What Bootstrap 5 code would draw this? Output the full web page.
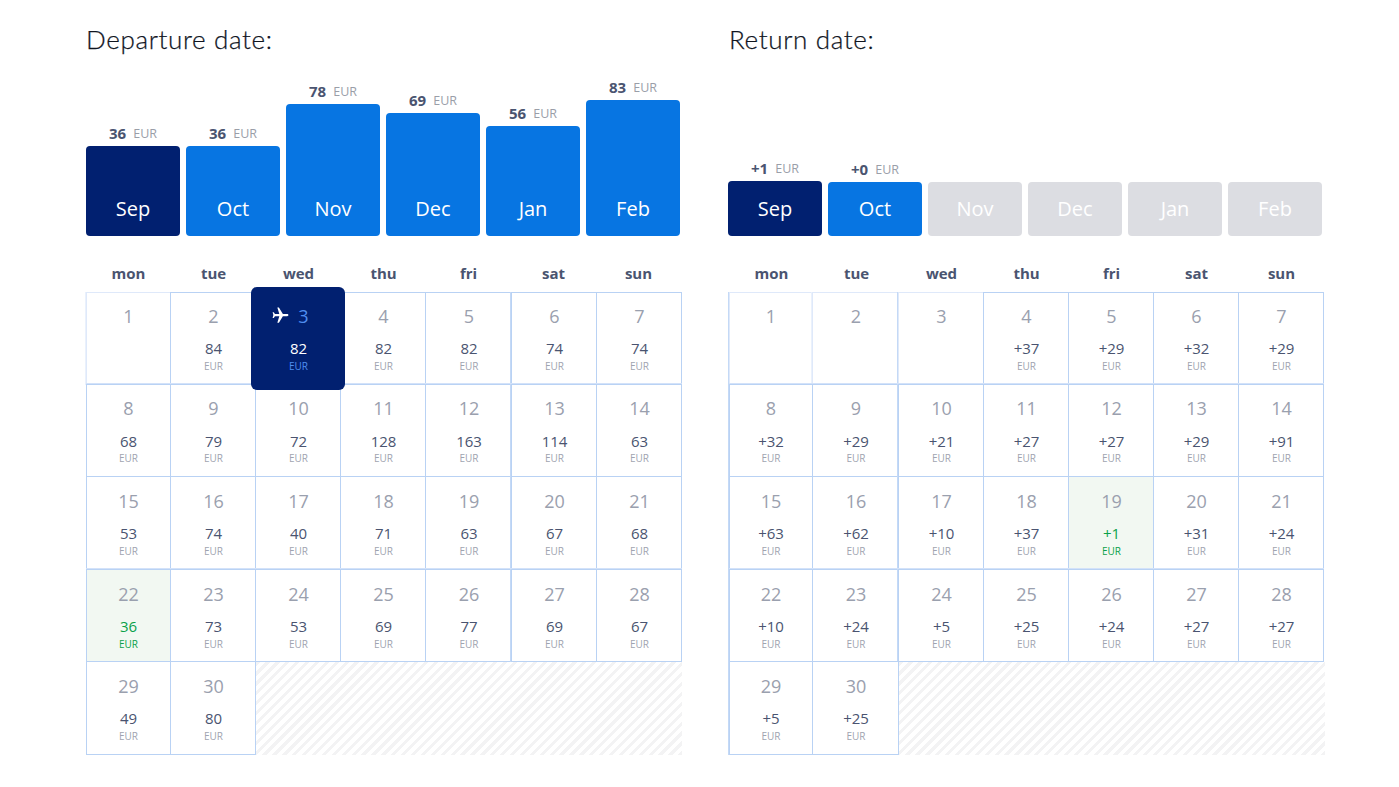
<!DOCTYPE html>
<html lang="en">
<head>
    <meta charset="UTF-8">
    <meta name="viewport" content="width=device-width, initial-scale=1.0">
    <title>Flight dates</title>
    <link href="https://cdn.jsdelivr.net/npm/bootstrap@5.3.0/dist/css/bootstrap.min.css" rel="stylesheet">
    <style>
        body {
            background-color: #fff;
            font-family: 'Open Sans', 'Liberation Sans', sans-serif;
        }
        .dates-wrap {
            padding-left: 86px;
            padding-bottom: 32px;
            gap: 47px;
        }
        .dates-panel {
            width: 596px;
        }
        .dates-title {
            font-family: Lato, 'Open Sans', sans-serif;
            font-weight: 300;
            font-size: 26px;
            line-height: 32px;
            letter-spacing: .65px;
            -webkit-text-stroke: .25px #10151f;
            color: #10151f;
            margin: 23px 0 0;
        }
        .month-row {
            height: 181px;
            gap: 6px;
        }
        .month-row.shift {
            margin-left: -1px;
        }
        .month-col {
            width: 94px;
        }
        .month-price {
            font-size: 12.5px;
            line-height: 20px;
            color: #9a9ea8;
            gap: 7px;
            margin-bottom: 1px;
        }
        .month-price b {
            font-size: 15px;
            color: #4a5470;
            margin-bottom: 2px;
        }
        .month-bar {
            font-size: 20px;
            color: #fff;
            padding-bottom: 12px;
            border-radius: 4px;
            background-color: #0775e2;
        }
        .month-bar.on {
            background-color: #012070;
        }
        .month-bar.off {
            background-color: #dcdde2;
        }
        .week-head {
            display: grid;
            grid-template-columns: repeat(7, 85px);
            margin-top: 27px;
            height: 29px;
            font-size: 15px;
            line-height: 20px;
            font-weight: 700;
            color: #4a5470;
        }
        .cal-grid {
            display: grid;
            grid-template-rows: 92px 92px 93px 92px 93px;
        }
        .cal-a {
            grid-template-columns: 84px 85px 85px 85px 86px 85px 85px;
        }
        .cal-b {
            grid-template-columns: 83px 86px 85px 85px 85px 85px 85px;
        }
        .cal-day {
            border: 1px solid #b9d2f4;
            margin: 0 -1px -1px 0;
            padding: 11px 0 0 1px;
            box-shadow: var(--edge-top, 0 0 transparent), var(--edge-left, 0 0 transparent);
        }
        .cal-day:nth-child(7n+1) {
            padding-left: 0;
        }
        .cal-day:nth-child(n+15) {
            padding-top: 12px;
        }
        /* the doubled grid lines */
        .cal-day:nth-child(n+8):nth-child(-n+14),
        .cal-day:nth-child(n+22):nth-child(-n+28) {
            --edge-top: 0 -1px 0 #d3e2f9;
        }
        .cal-a .cal-day:nth-child(7n+6),
        .cal-b .cal-day:nth-child(7n+1),
        .cal-b .cal-day:nth-child(7n+3) {
            --edge-left: -1px 0 0 #c4d9f6;
        }
        .cal-day.empty {
            border-color: #dfe9fa;
            --edge-left: -1px 0 0 #eaf1fc;
        }
        .cal-num {
            font-size: 18px;
            line-height: 24px;
            color: #9aa0ae;
        }
        .cal-price {
            font-size: 15px;
            line-height: 20px;
            margin: 11px 0 1px;
            color: #4a5470;
        }
        .cal-day:nth-child(-n+7) .cal-price,
        .cal-day:nth-child(n+15) .cal-price {
            margin-top: 10px;
        }
        .cal-day:nth-child(n+8):nth-child(-n+14) .cal-price {
            margin-bottom: 0;
        }
        .cal-cur {
            font-size: 10px;
            line-height: 14px;
            color: #a0a4b0;
        }
        .cal-day.best {
            background-color: #f2f8f2;
        }
        .cal-day.best .cal-price,
        .cal-day.best .cal-cur {
            color: #0ba14a;
        }
        .cal-day.pick {
            position: relative;
            z-index: 2;
            margin: -5px -5px -6px -4px;
            padding-top: 17px;
            border: 0;
            border-radius: 6px;
            background-color: #012070;
        }
        .pick .cal-num {
            color: #4f8ef0;
            padding-left: 10px;
        }
        .pick .cal-price {
            color: #fff;
        }
        .pick .cal-cur {
            color: #4f8ef0;
        }
        .pick svg {
            position: absolute;
            left: 20px;
            top: 19px;
            width: 19px;
            height: 19px;
            fill: #fff;
        }
        .cal-none {
            margin: 1px -1px -1px 1px;
            background: repeating-linear-gradient(135deg, #f3f3f4 0, #f3f3f4 3px, #fff 3px, #fff 7px);
        }
        .cal-b .cal-none {
            margin-right: -2px;
        }
    </style>
</head>
<body>
    <div class="dates-wrap d-flex">

        <!-- Departure -->
        <div class="dates-panel">
            <h2 class="dates-title">Departure date:</h2>
            <div class="month-row d-flex align-items-end">
                <div class="month-col"><div class="month-price d-flex justify-content-center align-items-center"><b>36</b><span>EUR</span></div><div class="month-bar on d-flex align-items-end justify-content-center" style="height: 90px">Sep</div></div>
                <div class="month-col"><div class="month-price d-flex justify-content-center align-items-center"><b>36</b><span>EUR</span></div><div class="month-bar d-flex align-items-end justify-content-center" style="height: 90px">Oct</div></div>
                <div class="month-col"><div class="month-price d-flex justify-content-center align-items-center"><b>78</b><span>EUR</span></div><div class="month-bar d-flex align-items-end justify-content-center" style="height: 132px">Nov</div></div>
                <div class="month-col"><div class="month-price d-flex justify-content-center align-items-center"><b>69</b><span>EUR</span></div><div class="month-bar d-flex align-items-end justify-content-center" style="height: 123px">Dec</div></div>
                <div class="month-col"><div class="month-price d-flex justify-content-center align-items-center"><b>56</b><span>EUR</span></div><div class="month-bar d-flex align-items-end justify-content-center" style="height: 110px">Jan</div></div>
                <div class="month-col"><div class="month-price d-flex justify-content-center align-items-center"><b>83</b><span>EUR</span></div><div class="month-bar d-flex align-items-end justify-content-center" style="height: 136px">Feb</div></div>
            </div>
            <div class="week-head text-center"><div>mon</div><div>tue</div><div>wed</div><div>thu</div><div>fri</div><div>sat</div><div>sun</div></div>
            <div class="cal-grid cal-a text-center">
                <div class="cal-day empty"><div class="cal-num">1</div></div>
                <div class="cal-day"><div class="cal-num">2</div><div class="cal-price">84</div><div class="cal-cur">EUR</div></div>
                <div class="cal-day pick"><svg viewBox="0 0 24 24"><path transform="rotate(90 12 12)" d="M21 16v-2l-8-5V3.5c0-.83-.67-1.5-1.5-1.5S10 2.67 10 3.5V9l-8 5v2l8-2.5V19l-2 1.5V22l3.5-1 3.5 1v-1.5L13 19v-5.500l8 2.500z"/></svg><div class="cal-num">3</div><div class="cal-price">82</div><div class="cal-cur">EUR</div></div>
                <div class="cal-day"><div class="cal-num">4</div><div class="cal-price">82</div><div class="cal-cur">EUR</div></div>
                <div class="cal-day"><div class="cal-num">5</div><div class="cal-price">82</div><div class="cal-cur">EUR</div></div>
                <div class="cal-day"><div class="cal-num">6</div><div class="cal-price">74</div><div class="cal-cur">EUR</div></div>
                <div class="cal-day"><div class="cal-num">7</div><div class="cal-price">74</div><div class="cal-cur">EUR</div></div>

                <div class="cal-day"><div class="cal-num">8</div><div class="cal-price">68</div><div class="cal-cur">EUR</div></div>
                <div class="cal-day"><div class="cal-num">9</div><div class="cal-price">79</div><div class="cal-cur">EUR</div></div>
                <div class="cal-day"><div class="cal-num">10</div><div class="cal-price">72</div><div class="cal-cur">EUR</div></div>
                <div class="cal-day"><div class="cal-num">11</div><div class="cal-price">128</div><div class="cal-cur">EUR</div></div>
                <div class="cal-day"><div class="cal-num">12</div><div class="cal-price">163</div><div class="cal-cur">EUR</div></div>
                <div class="cal-day"><div class="cal-num">13</div><div class="cal-price">114</div><div class="cal-cur">EUR</div></div>
                <div class="cal-day"><div class="cal-num">14</div><div class="cal-price">63</div><div class="cal-cur">EUR</div></div>

                <div class="cal-day"><div class="cal-num">15</div><div class="cal-price">53</div><div class="cal-cur">EUR</div></div>
                <div class="cal-day"><div class="cal-num">16</div><div class="cal-price">74</div><div class="cal-cur">EUR</div></div>
                <div class="cal-day"><div class="cal-num">17</div><div class="cal-price">40</div><div class="cal-cur">EUR</div></div>
                <div class="cal-day"><div class="cal-num">18</div><div class="cal-price">71</div><div class="cal-cur">EUR</div></div>
                <div class="cal-day"><div class="cal-num">19</div><div class="cal-price">63</div><div class="cal-cur">EUR</div></div>
                <div class="cal-day"><div class="cal-num">20</div><div class="cal-price">67</div><div class="cal-cur">EUR</div></div>
                <div class="cal-day"><div class="cal-num">21</div><div class="cal-price">68</div><div class="cal-cur">EUR</div></div>

                <div class="cal-day best"><div class="cal-num">22</div><div class="cal-price">36</div><div class="cal-cur">EUR</div></div>
                <div class="cal-day"><div class="cal-num">23</div><div class="cal-price">73</div><div class="cal-cur">EUR</div></div>
                <div class="cal-day"><div class="cal-num">24</div><div class="cal-price">53</div><div class="cal-cur">EUR</div></div>
                <div class="cal-day"><div class="cal-num">25</div><div class="cal-price">69</div><div class="cal-cur">EUR</div></div>
                <div class="cal-day"><div class="cal-num">26</div><div class="cal-price">77</div><div class="cal-cur">EUR</div></div>
                <div class="cal-day"><div class="cal-num">27</div><div class="cal-price">69</div><div class="cal-cur">EUR</div></div>
                <div class="cal-day"><div class="cal-num">28</div><div class="cal-price">67</div><div class="cal-cur">EUR</div></div>

                <div class="cal-day"><div class="cal-num">29</div><div class="cal-price">49</div><div class="cal-cur">EUR</div></div>
                <div class="cal-day"><div class="cal-num">30</div><div class="cal-price">80</div><div class="cal-cur">EUR</div></div>
                <div class="cal-none" style="grid-column: span 5"></div>
            </div>
        </div>

        <!-- Return -->
        <div class="dates-panel">
            <h2 class="dates-title">Return date:</h2>
            <div class="month-row shift d-flex align-items-end">
                <div class="month-col"><div class="month-price d-flex justify-content-center align-items-center"><b>+1</b><span>EUR</span></div><div class="month-bar on d-flex align-items-end justify-content-center" style="height: 55px">Sep</div></div>
                <div class="month-col"><div class="month-price d-flex justify-content-center align-items-center"><b>+0</b><span>EUR</span></div><div class="month-bar d-flex align-items-end justify-content-center" style="height: 54px">Oct</div></div>
                <div class="month-col"><div class="month-bar off d-flex align-items-end justify-content-center" style="height: 54px">Nov</div></div>
                <div class="month-col"><div class="month-bar off d-flex align-items-end justify-content-center" style="height: 54px">Dec</div></div>
                <div class="month-col"><div class="month-bar off d-flex align-items-end justify-content-center" style="height: 54px">Jan</div></div>
                <div class="month-col"><div class="month-bar off d-flex align-items-end justify-content-center" style="height: 54px">Feb</div></div>
            </div>
            <div class="week-head text-center"><div>mon</div><div>tue</div><div>wed</div><div>thu</div><div>fri</div><div>sat</div><div>sun</div></div>
            <div class="cal-grid cal-b text-center">
                <div class="cal-day empty"><div class="cal-num">1</div></div>
                <div class="cal-day empty"><div class="cal-num">2</div></div>
                <div class="cal-day empty"><div class="cal-num">3</div></div>
                <div class="cal-day"><div class="cal-num">4</div><div class="cal-price">+37</div><div class="cal-cur">EUR</div></div>
                <div class="cal-day"><div class="cal-num">5</div><div class="cal-price">+29</div><div class="cal-cur">EUR</div></div>
                <div class="cal-day"><div class="cal-num">6</div><div class="cal-price">+32</div><div class="cal-cur">EUR</div></div>
                <div class="cal-day"><div class="cal-num">7</div><div class="cal-price">+29</div><div class="cal-cur">EUR</div></div>

                <div class="cal-day"><div class="cal-num">8</div><div class="cal-price">+32</div><div class="cal-cur">EUR</div></div>
                <div class="cal-day"><div class="cal-num">9</div><div class="cal-price">+29</div><div class="cal-cur">EUR</div></div>
                <div class="cal-day"><div class="cal-num">10</div><div class="cal-price">+21</div><div class="cal-cur">EUR</div></div>
                <div class="cal-day"><div class="cal-num">11</div><div class="cal-price">+27</div><div class="cal-cur">EUR</div></div>
                <div class="cal-day"><div class="cal-num">12</div><div class="cal-price">+27</div><div class="cal-cur">EUR</div></div>
                <div class="cal-day"><div class="cal-num">13</div><div class="cal-price">+29</div><div class="cal-cur">EUR</div></div>
                <div class="cal-day"><div class="cal-num">14</div><div class="cal-price">+91</div><div class="cal-cur">EUR</div></div>

                <div class="cal-day"><div class="cal-num">15</div><div class="cal-price">+63</div><div class="cal-cur">EUR</div></div>
                <div class="cal-day"><div class="cal-num">16</div><div class="cal-price">+62</div><div class="cal-cur">EUR</div></div>
                <div class="cal-day"><div class="cal-num">17</div><div class="cal-price">+10</div><div class="cal-cur">EUR</div></div>
                <div class="cal-day"><div class="cal-num">18</div><div class="cal-price">+37</div><div class="cal-cur">EUR</div></div>
                <div class="cal-day best"><div class="cal-num">19</div><div class="cal-price">+1</div><div class="cal-cur">EUR</div></div>
                <div class="cal-day"><div class="cal-num">20</div><div class="cal-price">+31</div><div class="cal-cur">EUR</div></div>
                <div class="cal-day"><div class="cal-num">21</div><div class="cal-price">+24</div><div class="cal-cur">EUR</div></div>

                <div class="cal-day"><div class="cal-num">22</div><div class="cal-price">+10</div><div class="cal-cur">EUR</div></div>
                <div class="cal-day"><div class="cal-num">23</div><div class="cal-price">+24</div><div class="cal-cur">EUR</div></div>
                <div class="cal-day"><div class="cal-num">24</div><div class="cal-price">+5</div><div class="cal-cur">EUR</div></div>
                <div class="cal-day"><div class="cal-num">25</div><div class="cal-price">+25</div><div class="cal-cur">EUR</div></div>
                <div class="cal-day"><div class="cal-num">26</div><div class="cal-price">+24</div><div class="cal-cur">EUR</div></div>
                <div class="cal-day"><div class="cal-num">27</div><div class="cal-price">+27</div><div class="cal-cur">EUR</div></div>
                <div class="cal-day"><div class="cal-num">28</div><div class="cal-price">+27</div><div class="cal-cur">EUR</div></div>

                <div class="cal-day"><div class="cal-num">29</div><div class="cal-price">+5</div><div class="cal-cur">EUR</div></div>
                <div class="cal-day"><div class="cal-num">30</div><div class="cal-price">+25</div><div class="cal-cur">EUR</div></div>
                <div class="cal-none" style="grid-column: span 5"></div>
            </div>
        </div>

    </div>

    <script src="https://cdn.jsdelivr.net/npm/bootstrap@5.3.0/dist/js/bootstrap.bundle.min.js"></script>
</body>
</html>
